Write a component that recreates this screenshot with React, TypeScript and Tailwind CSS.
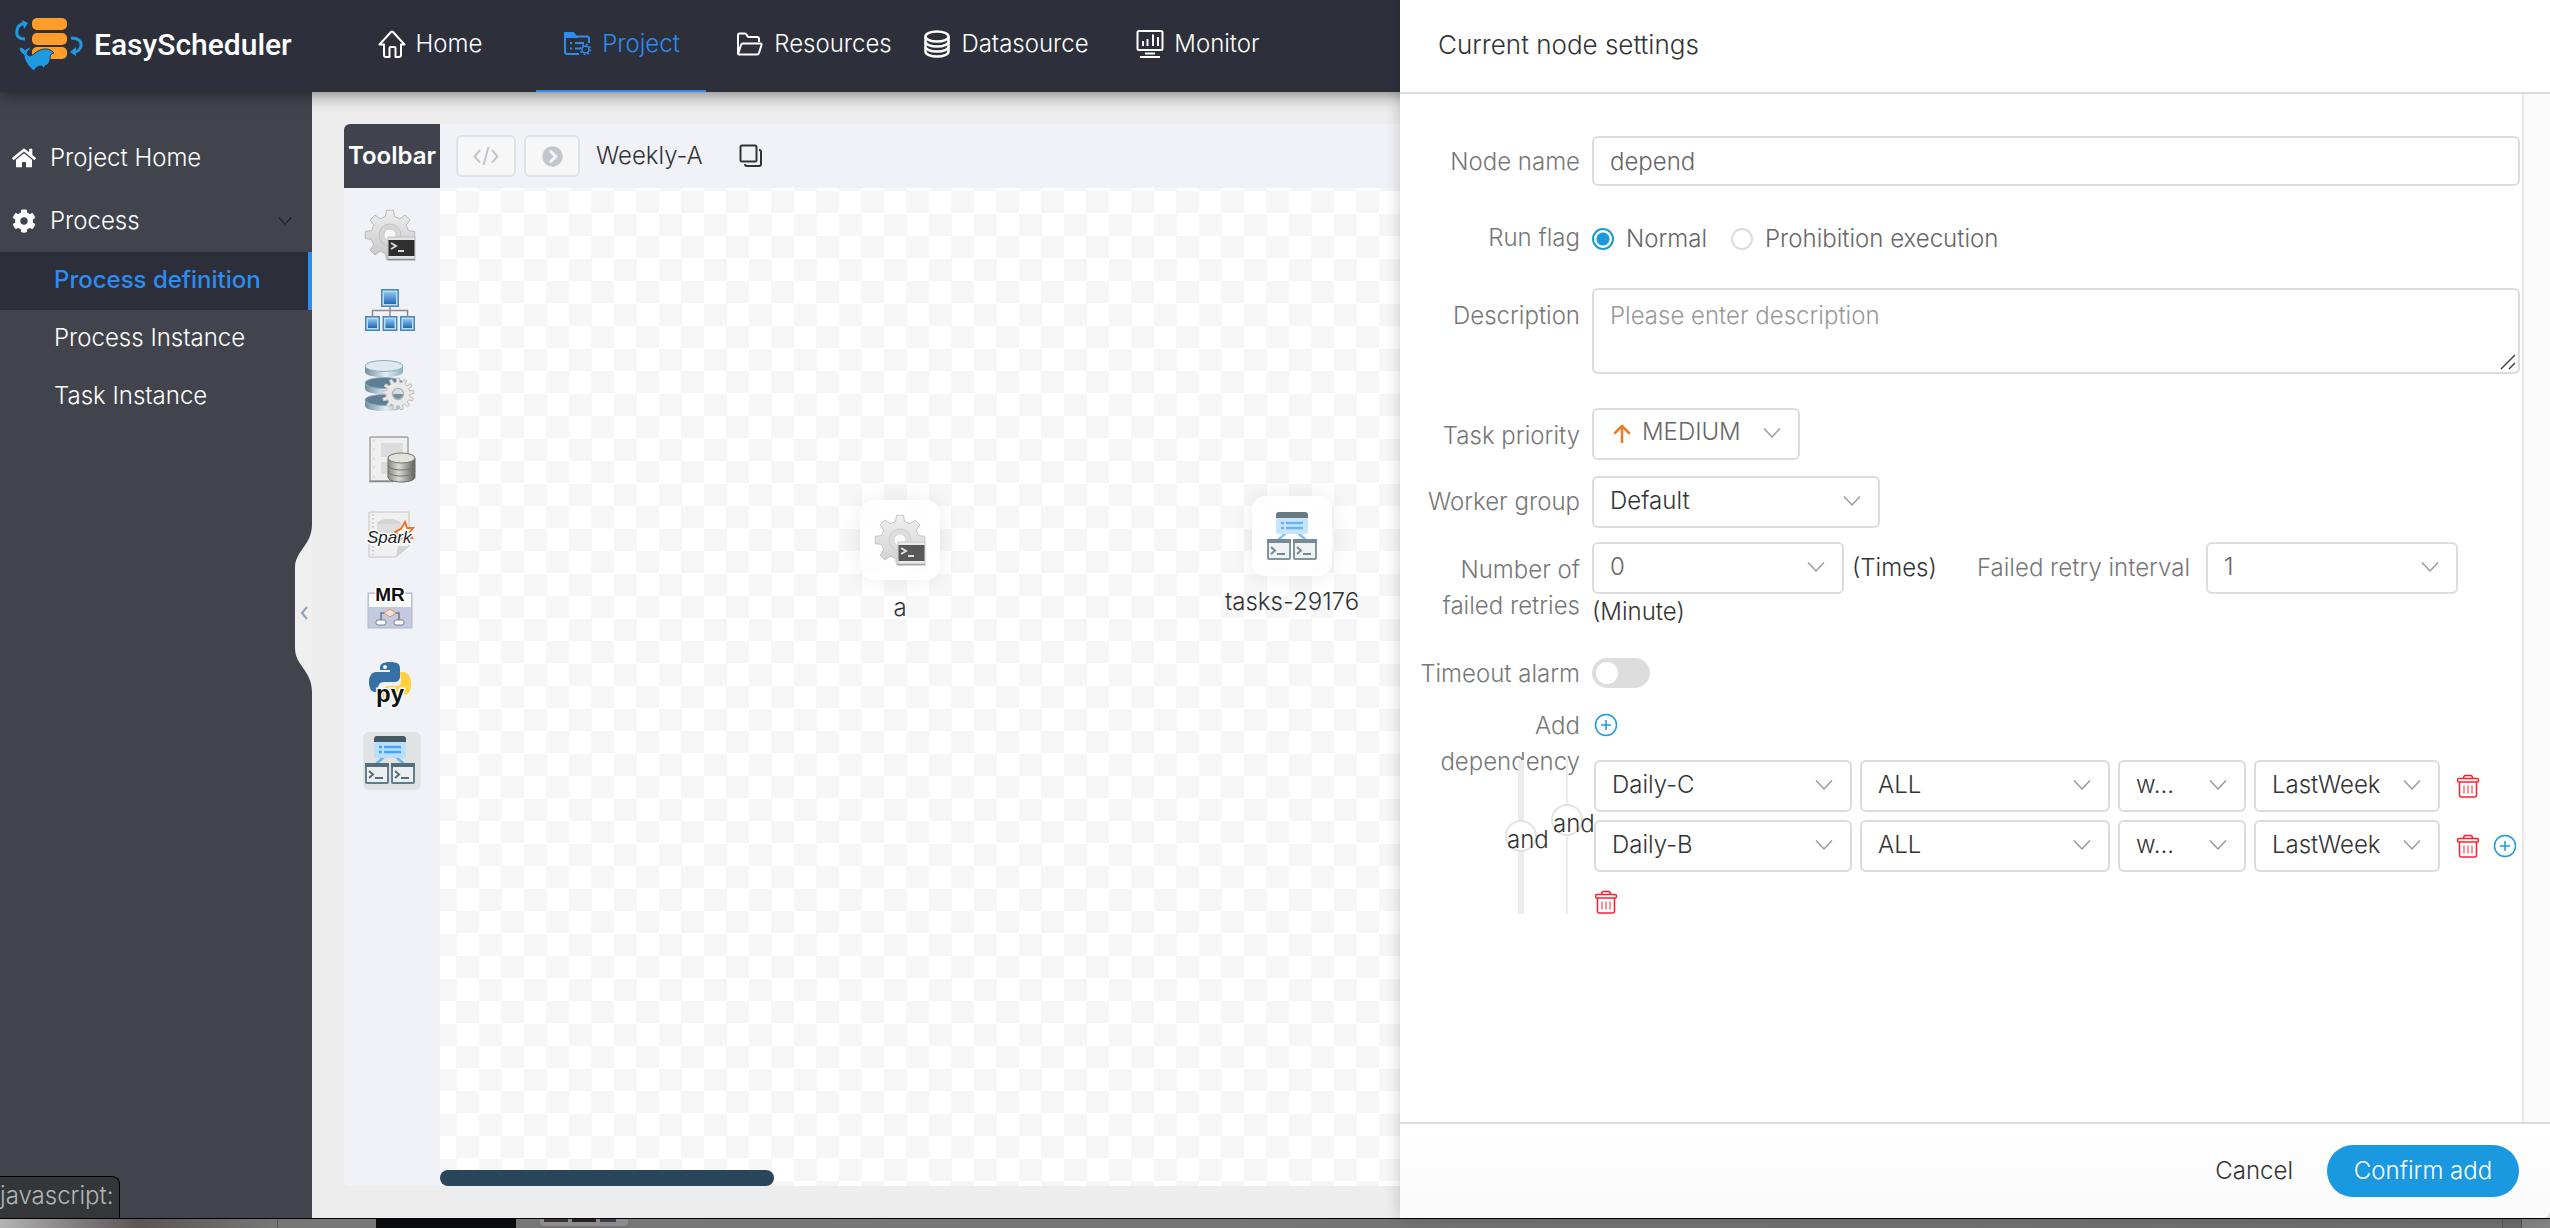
import { useState } from "react";
import type { ReactNode } from "react";
import { FaHome, FaCog, FaChevronCircleRight } from "react-icons/fa";

type P = { className?: string };

/** Outline of a cog wheel with flat-topped teeth. */
function gearPath(cx: number, cy: number, outer: number, inner: number, teeth: number) {
  const step = (Math.PI * 2) / teeth;
  const pts: string[] = [];
  for (let i = 0; i < teeth; i++) {
    const a = i * step - Math.PI / 2;
    const corners: [number, number][] = [
      [inner, -0.3],
      [outer, -0.18],
      [outer, 0.18],
      [inner, 0.3],
    ];
    for (const [r, f] of corners) {
      pts.push(`${(cx + r * Math.cos(a + f * step)).toFixed(2)} ${(cy + r * Math.sin(a + f * step)).toFixed(2)}`);
    }
  }
  return `M${pts.join("L")}Z`;
}

/* ---------- brand and navigation icons ---------- */

function Logo() {
  return (
    <svg className="h-[56px] w-[70px] shrink-0" viewBox="0 0 70 56" fill="none" aria-hidden="true">
      <g fill="#ff9d2a">
        <rect x="18" y="2" width="35" height="12" rx="5" />
        <rect x="18" y="17" width="35" height="12" rx="5" />
        <rect x="18" y="31" width="35" height="12" rx="5" />
      </g>
      <path d="M11 23C4 23 2 19 3 15c0-4 3-7 8-8" stroke="#1d9ae0" strokeWidth="3" />
      <path d="M8 4l6 3-4 6" fill="#1d9ae0" />
      <path d="M57 22c7 0 11 3 10 8-1 4-4 6-8 6" stroke="#1d9ae0" strokeWidth="3" />
      <path d="M62 31l-6 5 6 4z" fill="#1d9ae0" />
      <path
        d="M5 31c3 0 5 1 6 3 2-2 4-3 6-2-2 2-4 4-4 6 2 3 5 2 8-1 5-4 11-5 15-3 2 1 3 2 4 3-3 1-4 2-4 4 1 4-2 8-5 9l-2 3-1-3c-4 0-6 1-8 5-5-4-10-10-10-16-3-2-5-4-5-8z"
        fill="#1d9ae0"
        stroke="#2d2f3b"
        strokeWidth="1"
      />
    </svg>
  );
}

function HomeIcon() {
  return (
    <svg className="size-[28px]" viewBox="0 0 28 28" fill="none" stroke="currentColor" strokeWidth="2" strokeLinejoin="round" aria-hidden="true">
      <path d="M1.5 14.5L13 2q1-1 2 0l11.500 12.500h-3.500V25q0 2-2 2h-3.500v-9q0-1-1-1h-4q-1 0-1 1v9H8q-2 0-2-2V14.500z" />
    </svg>
  );
}

function ProjectIcon() {
  return (
    <svg className="h-[24px] w-[28px]" viewBox="0 0 28 24" fill="none" stroke="currentColor" strokeWidth="2" aria-hidden="true">
      <path d="M15 22H3q-2 0-2-2V2.500" />
      <path d="M1 1.500Q1 1 2 1h7l3 3.500h11q2 0 2 2V11" />
      <path d="M1 1h8l3 4H1z" fill="currentColor" />
      <path d="M6 11h2m3 0h9M6 16.500h2m3 0h5" strokeWidth="2" />
      <circle cx="21.500" cy="17.500" r="3.500" strokeWidth="1.500" />
      <circle cx="21.500" cy="17.500" r="5" strokeWidth="1.500" strokeDasharray="1.900 2" />
    </svg>
  );
}

function FolderIcon() {
  return (
    <svg className="h-[24px] w-[28px]" viewBox="0 0 28 24" fill="none" stroke="currentColor" strokeWidth="2" strokeLinejoin="round" aria-hidden="true">
      <path d="M2 22V3q0-1.500 1.500-1.500H9q1 0 1.500 1L12 5h9q2 0 2 2v3" />
      <path d="M2 22L5 13q.5-1.500 2-1.500h17.500q1.500 0 1 1.500l-2.500 8q-.5 1.500-2 1.500H3q-1 0-1-1z" />
    </svg>
  );
}

function DatabaseIcon() {
  return (
    <svg className="size-[28px]" viewBox="0 0 28 28" fill="none" stroke="currentColor" strokeWidth="2.500" aria-hidden="true">
      <ellipse cx="14" cy="6.500" rx="11.500" ry="5" />
      <path d="M2.500 6.500v15c0 2.800 5 5 11.500 5s11.500-2.200 11.500-5v-15" />
      <path d="M2.500 11.500c0 2.800 5 5 11.500 5s11.500-2.200 11.500-5M2.500 16.500c0 2.800 5 5 11.500 5s11.500-2.200 11.500-5" />
    </svg>
  );
}

function MonitorIcon() {
  return (
    <svg className="size-[28px]" viewBox="0 0 28 28" fill="none" stroke="currentColor" strokeWidth="2" aria-hidden="true">
      <rect x="1.500" y="1" width="25" height="19" rx="1.500" />
      <path d="M7 11v5m4.500-7v7M17 4.500V16m5-9v9M9 23.500h10M4 27h20" />
    </svg>
  );
}

function ChevronDown({ className = "" }: P) {
  return (
    <svg className={className} viewBox="0 0 18 12" fill="none" stroke="currentColor" strokeWidth="1.500" aria-hidden="true">
      <path d="M1 1.500l8 8.500 8-8.500" />
    </svg>
  );
}

function CopyIcon() {
  return (
    <svg className="h-[24px] w-[24px]" viewBox="0 0 24 24" fill="none" stroke="currentColor" strokeWidth="2" aria-hidden="true">
      <rect x="1.500" y="1.500" width="16" height="16" rx="1.500" />
      <path d="M20 6q2 0 2 2v12q0 2-2 2H8q-2 0-2-2" />
    </svg>
  );
}

function CodeIcon() {
  return (
    <svg className="h-[20px] w-[26px]" viewBox="0 0 26 20" fill="none" stroke="currentColor" strokeWidth="2" aria-hidden="true">
      <path d="M7 4L1.500 10.500 7 16.500M19 4l5.500 6.500L19 16.500M15.500 1l-5 18" />
    </svg>
  );
}

function PlusCircle() {
  return (
    <svg className="size-6" viewBox="0 0 24 24" fill="none" stroke="currentColor" strokeWidth="1.500" aria-hidden="true">
      <circle cx="12" cy="12" r="10.500" />
      <path d="M12 7v10M7 12h10" />
    </svg>
  );
}

function TrashIcon() {
  return (
    <svg className="size-6" viewBox="0 0 24 24" fill="none" stroke="currentColor" strokeWidth="1.500" strokeLinejoin="round" aria-hidden="true">
      <path d="M7.500 4.500q0-3 2-3h5q2 0 2 3" />
      <rect x="1.500" y="4.500" width="21" height="3.500" rx="1.500" />
      <path d="M3.500 8v13q0 2 2 2h13q2 0 2-2V8" />
      <path d="M8 11.500v8m4-8v8m4-8v8" strokeWidth="1" />
    </svg>
  );
}

/* ---------- task type icons ---------- */

function ShellIcon() {
  return (
    <svg className="size-[52px]" viewBox="0 0 52 52" aria-hidden="true">
      <defs>
        <linearGradient id="gearFill" x1="0" y1="0" x2="0" y2="1">
          <stop offset="0" stopColor="#ededed" />
          <stop offset="1" stopColor="#c6c6c6" />
        </linearGradient>
      </defs>
      <path d={gearPath(26, 26, 25, 19, 8)} fill="url(#gearFill)" stroke="#b8b8b8" strokeWidth="1" strokeLinejoin="round" />
      <circle cx="26" cy="26" r="11" fill="#d6d6d6" stroke="#c2c2c2" />
      <circle cx="26" cy="26" r="6" fill="#fafafa" stroke="#cfcfcf" />
      <rect x="24" y="28" width="27" height="23" fill="#e4e4e4" stroke="#bdbdbd" />
      <rect x="24.500" y="31" width="26" height="16" fill="#2f2f2f" />
      <path d="M27 34l5 3-5 3M34 42h6" stroke="#d8d8d8" strokeWidth="2" fill="none" />
      <path d="M24 50.500h27" stroke="#8d8d8d" strokeWidth="1.500" />
    </svg>
  );
}

function SubProcessIcon() {
  const box = (x: number, y: number, w: number, h: number) => (
    <g key={x}>
      <rect x={x} y={y} width={w} height={h} fill="#4d86b8" />
      <rect x={x + 1.5} y={y + 1.5} width={w - 3} height={h - 3} fill="#b8dcf3" />
      <rect x={x + 3} y={y + 3} width={w - 6} height={h - 6} fill="url(#screenFill)" />
    </g>
  );
  return (
    <svg className="size-[52px]" viewBox="0 0 52 52" aria-hidden="true">
      <defs>
        <linearGradient id="screenFill" x1="0" y1="0" x2="0" y2="1">
          <stop offset="0" stopColor="#8cc4ee" />
          <stop offset="1" stopColor="#1e68b4" />
        </linearGradient>
      </defs>
      <path d="M26 22v10M8.500 33v-6.500h35V33" stroke="#8d8d8d" strokeWidth="1.500" fill="none" />
      {box(17, 5, 18, 18)}
      {box(1, 32, 15, 15)}
      {box(18.500, 32, 15, 15)}
      {box(36, 32, 15, 15)}
    </svg>
  );
}

function ProcedureIcon() {
  return (
    <svg className="size-[52px]" viewBox="0 0 52 52" aria-hidden="true">
      <defs>
        <linearGradient id="drumFill" x1="0" y1="0" x2="1" y2="0">
          <stop offset="0" stopColor="#6d8fa4" />
          <stop offset="0.550" stopColor="#e2edf2" />
          <stop offset="1" stopColor="#8fb0c2" />
        </linearGradient>
      </defs>
      {[35, 18, 1].map((y) => (
        <g key={y}>
          <path d={`M1 ${y + 6}v6c0 3 8 5 19 5s19-2 19-5v-6z`} fill="url(#drumFill)" />
          <ellipse cx="20" cy={y + 6} rx="19" ry="5.500" fill={y === 1 ? "#dfe9ee" : "#5e7f93"} stroke="#8facbc" strokeWidth="1" />
        </g>
      ))}
      <path d={gearPath(34, 35, 16, 12, 13)} fill="#e9e9e9" stroke="#bcbcbc" strokeWidth="1" />
      <circle cx="34" cy="35" r="5.500" fill="#6f8fa2" stroke="#b5b5b5" strokeWidth="1.500" />
      <path d="M29 35a5 5 0 0 1 10 0z" fill="#d5e0e6" />
    </svg>
  );
}

function SqlIcon() {
  return (
    <svg className="size-[52px]" viewBox="0 0 52 52" aria-hidden="true">
      <defs>
        <linearGradient id="canFill" x1="0" y1="0" x2="1" y2="0">
          <stop offset="0" stopColor="#8a8a85" />
          <stop offset="0.400" stopColor="#dcdcd6" />
          <stop offset="1" stopColor="#5f5f5a" />
        </linearGradient>
      </defs>
      <rect x="6" y="3" width="38" height="44" rx="1" fill="#efefef" stroke="#a3a3a3" strokeWidth="1.500" />
      <path d="M10 5v40" stroke="#cfcfcf" strokeWidth="1" strokeDasharray="3 6" />
      <path d="M17 9h22v14H17zM17 28h8v12h-8z" fill="#dcdcdc" />
      <path d="M5 47.500h24" stroke="#888888" strokeWidth="1.500" />
      <path d="M24 24v19c0 3 6 5 13.500 5S51 46 51 43V24z" fill="url(#canFill)" stroke="#6c6c68" strokeWidth="1" />
      <ellipse cx="37.500" cy="24" rx="13.500" ry="5" fill="#e3e3de" stroke="#73736f" strokeWidth="1" />
      <path d="M24 31c0 3 6 5 13.500 5S51 34 51 31M24 37c0 3 6 5 13.500 5S51 40 51 37" fill="none" stroke="#74746f" strokeWidth="1" />
    </svg>
  );
}

function SparkIcon() {
  return (
    <svg className="size-[52px]" viewBox="0 0 52 52" aria-hidden="true">
      <path d="M5 3h40v34L32 48H5z" fill="#f0f0f0" stroke="#c4c4c4" strokeWidth="1" />
      <path d="M45 37H34l-2 11z" fill="#d4d4d4" />
      <path d="M9 5v41" stroke="#c8c8c8" strokeWidth="2" strokeDasharray="1.500 2.500" />
      <ellipse cx="25" cy="15" rx="12" ry="5" fill="#d3d3d3" />
      <path d="M13 15v9h24v-9" fill="#dedede" />
      <path d="M41 13l2 6 6 0-4 5 3 5-7-1-5 3 0-5-5-3 6-3z" fill="#ffffff" stroke="#f0742c" strokeWidth="2" />
      <text x="3" y="34" fontSize="17" fontStyle="italic" fontWeight="400" fontFamily="Liberation Sans, sans-serif" fill="#1e1e1e" stroke="#ffffff" strokeWidth="3" paintOrder="stroke">
        Spark
      </text>
    </svg>
  );
}

function MrIcon() {
  return (
    <svg className="size-[52px]" viewBox="0 0 52 52" aria-hidden="true">
      <rect x="4" y="9" width="44" height="35" fill="#c3c9de" stroke="#b3b8cb" strokeWidth="1" />
      <rect x="5" y="10" width="42" height="13" fill="#fafafc" />
      <path d="M17 39v-10h6M29 29h6v10" fill="none" stroke="#6f7688" strokeWidth="1.500" />
      <path d="M26 25l6 4-6 4-6-4z" fill="#e9e3e0" stroke="#e0955a" strokeWidth="1" />
      <rect x="12" y="36" width="10" height="5" rx="2" fill="#fff" stroke="#777f90" />
      <rect x="30" y="36" width="10" height="5" rx="2" fill="#fff" stroke="#777f90" />
      <text x="26" y="17" textAnchor="middle" fontSize="19" fontWeight="700" fontFamily="Liberation Sans, sans-serif" fill="#111111" stroke="#ffffff" strokeWidth="3" paintOrder="stroke">
        MR
      </text>
    </svg>
  );
}

function PythonIcon() {
  return (
    <svg className="size-[52px]" viewBox="0 0 52 52" aria-hidden="true">
      <path d="M36 13h3c5 0 8 5 8 12 0 8-3 11-8 11H25v4H17v-5c0-5 3-8 8-8h8q4 0 4-6z" fill="#ffcf3e" />
      <path d="M16 9c0-4 3-6 10-6s10 2 10 6v8c0 4-2 6-6 6H20c-4 0-6 3-6 6v4h-3c-4 0-6-4-6-10s3-10 7-10h14v-2H16z" fill="#3571a4" />
      <circle cx="21" cy="8" r="2" fill="#ffffff" />
      <text x="26" y="43" textAnchor="middle" fontSize="24" fontWeight="700" fontFamily="Liberation Sans, sans-serif" fill="#111111" stroke="#ffffff" strokeWidth="3" paintOrder="stroke">
        py
      </text>
    </svg>
  );
}

function DependentIcon() {
  return (
    <svg className="size-[52px]" viewBox="0 0 52 52" aria-hidden="true">
      <path d="M20 23l-8 7M32 23l8 7" stroke="#64b5f6" strokeWidth="2.500" />
      <rect x="10" y="4" width="32" height="20" rx="2" fill="#bbdefb" />
      <path d="M10 8V5q0-3 3-3h26q3 0 3 3v3z" fill="#455a64" />
      <path d="M15 13h3m2 0h17M15 18h3m2 0h17" stroke="#42a5f5" strokeWidth="2.500" />
      {[1, 27].map((x) => (
        <g key={x}>
          <rect x={x + 1} y="30" width="22" height="19" rx="1" fill="#eceff1" stroke="#607d8b" strokeWidth="2" />
          <path d={`M${x} 31h24`} stroke="#546e7a" strokeWidth="4" />
          <path d={`M${x + 4} 37l4 3.500-4 3.500M${x + 10} 44h8`} fill="none" stroke="#546e7a" strokeWidth="2" />
        </g>
      ))}
    </svg>
  );
}

/* ---------- shared controls ---------- */

function Select({ label, value, options, width, className = "text-[#333]", lead }: {
  label: string;
  value: string;
  options?: string[];
  width: string;
  className?: string;
  lead?: ReactNode;
}) {
  const [v, setV] = useState(value);
  return (
    <div className={`relative shrink-0 ${width}`}>
      {lead}
      <select
        aria-label={label}
        value={v}
        onChange={(e) => setV(e.target.value)}
        className={`block h-[52px] w-full appearance-none rounded-md border-2 border-[#dcdcdc] bg-white pr-10 ${lead ? "pb-1 pl-[48px]" : "pb-[2px] pl-4"} ${className}`}
      >
        {(options ?? [value]).map((o) => (
          <option key={o}>{o}</option>
        ))}
      </select>
      <ChevronDown className="pointer-events-none absolute top-[19px] right-[19px] h-[12px] w-[18px] text-[#999]" />
    </div>
  );
}

function Row({ label, htmlFor, className, labelClass = "pl-6", children }: {
  label: string;
  htmlFor?: string;
  className: string;
  labelClass?: string;
  children: ReactNode;
}) {
  return (
    <div className={`flex items-start gap-3 ${className}`}>
      <label htmlFor={htmlFor} className={`w-[180px] shrink-0 text-right leading-9 text-[#777] ${labelClass}`}>
        {label}
      </label>
      <div className="min-w-0 flex-1">{children}</div>
    </div>
  );
}

const NAV = [
  { name: "Home", icon: <HomeIcon /> },
  { name: "Project", icon: <ProjectIcon /> },
  { name: "Resources", icon: <FolderIcon /> },
  { name: "Datasource", icon: <DatabaseIcon /> },
  { name: "Monitor", icon: <MonitorIcon /> },
];

const TOOLS = [
  { name: "Shell", icon: <ShellIcon /> },
  { name: "Sub process", icon: <SubProcessIcon /> },
  { name: "Procedure", icon: <ProcedureIcon /> },
  { name: "SQL", icon: <SqlIcon /> },
  { name: "Spark", icon: <SparkIcon /> },
  { name: "MR", icon: <MrIcon /> },
  { name: "Python", icon: <PythonIcon /> },
  { name: "Dependent", icon: <DependentIcon /> },
];

const DEPENDENCIES = ["Daily-C", "Daily-B"];

function Header() {
  return (
    <header className="relative z-10 flex h-[92px] shrink-0 bg-[#2d2f3b] text-white shadow-[0_2px_16px_rgba(0,0,0,0.5)]">
      <a href="#home" className="flex w-[344px] shrink-0 items-center gap-[10px] pb-1 pl-[14px]">
        <Logo />
        <span className="font-[Roboto,sans-serif] text-[30px] font-medium">EasyScheduler</span>
      </a>
      <nav className="flex gap-[22px]">
        {NAV.map((n) => (
          <a
            key={n.name}
            href={`#${n.name.toLowerCase()}`}
            className={`flex w-[170px] items-center justify-center gap-[10px] border-b-2 pb-[2px] pl-[2px] ${
              n.name === "Project" ? "border-[#2d8cf0] text-[#2d8cf0]" : "border-transparent"
            }`}
          >
            {n.icon}
            {n.name}
          </a>
        ))}
      </nav>
    </header>
  );
}

function Sidebar() {
  return (
    <aside className="relative w-[312px] shrink-0 bg-[#41444d] pt-[34px] text-white">
      <a href="#project-home" className="flex h-16 items-center gap-[14px] pl-3">
        <FaHome className="size-6" />
        Project Home
      </a>
      <button type="button" className="flex h-[62px] w-full items-center gap-[14px] pr-5 pl-3 text-left">
        <FaCog className="size-6" />
        <span className="flex-1">Process</span>
        <ChevronDown className="h-[10px] w-[14px] text-[#222]" />
      </button>
      <a href="#definition" className="flex h-[58px] items-center border-r-4 border-[#2d8cf0] bg-[#2c2e3a] pb-[2px] pl-[54px] font-medium text-[#2d8cf0]">
        Process definition
      </a>
      <a href="#instance" className="flex h-[58px] items-center pb-[2px] pl-[54px]">
        Process Instance
      </a>
      <a href="#task" className="flex h-[58px] items-center pb-[2px] pl-[54px]">
        Task Instance
      </a>
      <button type="button" aria-label="Collapse menu" className="absolute top-[432px] right-0">
        <svg className="h-[168px] w-[18px]" viewBox="0 0 18 168" fill="none" aria-hidden="true">
          <path d="M18 0C18 22 1 26 1 44v80c0 18 17 22 17 44z" fill="#efeff0" />
          <path d="M13 83l-5 6 5 6" stroke="#8fa0c0" strokeWidth="2" />
        </svg>
      </button>
    </aside>
  );
}

function Canvas() {
  return (
    <div className="relative min-w-0 flex-1 overflow-hidden bg-[repeating-conic-gradient(#f6f6f6_0_25%,#ffffff_0_50%)] bg-[length:45px_45px] bg-[position:-6px_3px]">
      <div className="absolute top-[312px] left-[420px] flex w-20 flex-col items-center">
        <div className="flex size-20 items-center justify-center rounded-[14px] bg-white/90 shadow-[0_0_20px_rgba(0,0,0,0.08)]">
          <div className="opacity-80">
            <ShellIcon />
          </div>
        </div>
        <span className="mt-[10px] leading-9 whitespace-nowrap">a</span>
      </div>
      <div className="absolute top-[308px] left-[812px] flex w-20 flex-col items-center">
        <div className="flex size-20 items-center justify-center rounded-[14px] bg-white/90 shadow-[0_0_20px_rgba(0,0,0,0.08)]">
          <div className="opacity-80">
            <DependentIcon />
          </div>
        </div>
        <span className="mt-[8px] leading-9 whitespace-nowrap">tasks-29176</span>
      </div>
      <div className="absolute bottom-0 left-0 h-4 w-[334px] rounded-full bg-[#2b455a]" />
    </div>
  );
}

function Workspace() {
  return (
    <main className="flex min-w-0 flex-1 bg-[#ededed] pt-8 pb-8 pl-8">
      <div className="flex min-w-0 flex-1 flex-col overflow-hidden rounded-l-md bg-[#f0f2f7]">
        <div className="flex h-16 shrink-0 items-center">
          <h2 className="flex h-full w-24 items-center justify-center bg-[#40424d] font-semibold text-white">Toolbar</h2>
          <button type="button" aria-label="View source" className="ml-4 flex h-[42px] w-[60px] items-center justify-center rounded-md border-2 border-[#e0e1e6] bg-[#f7f7f7] text-[#c3c6cc]">
            <CodeIcon />
          </button>
          <button type="button" aria-label="Run" className="ml-2 flex h-[42px] w-14 items-center justify-center rounded-md border-2 border-[#e0e1e6] bg-[#f7f7f7] text-[#c3c6cc]">
            <FaChevronCircleRight className="size-[21px]" />
          </button>
          <span className="ml-4">Weekly-A</span>
          <button type="button" aria-label="Copy name" className="ml-9">
            <CopyIcon />
          </button>
        </div>
        <div className="flex min-h-0 flex-1">
          <div className="flex w-24 shrink-0 flex-col items-center gap-[17px] pt-[19px]">
            {TOOLS.map((t) => (
              <button
                key={t.name}
                type="button"
                aria-label={t.name}
                className={`flex size-[58px] shrink-0 items-center justify-center rounded-md pr-1 pb-[2px] ${t.name === "Dependent" ? "bg-[#e0e2e4]" : ""}`}
              >
                {t.icon}
              </button>
            ))}
          </div>
          <Canvas />
        </div>
      </div>
    </main>
  );
}

function Relation({ className, line, knob }: { className: string; line: string; knob: string }) {
  return (
    <div className={`absolute top-0 h-[154px] w-8 ${className}`}>
      <div className={`mx-auto h-full bg-[#ececec] ${line}`} />
      <button type="button" className={`absolute left-0 size-8 rounded-full border-2 border-[#e2e2e2] bg-white leading-9 text-[#333] ${knob}`}>
        and
      </button>
    </div>
  );
}

function NodeForm() {
  const [flag, setFlag] = useState("normal");
  const radio =
    "size-[22px] appearance-none rounded-full border-2 border-[#dcdcdc] bg-white checked:border-[#1a99e0] checked:bg-[radial-gradient(#1a99e0_0_6px,#ffffff_7px)]";
  return (
    <form className="min-w-0 flex-1 pt-[42px] pr-[2px] text-[#666]" onSubmit={(e) => e.preventDefault()}>
      <Row label="Node name" htmlFor="node-name" className="h-[50px]" labelClass="pt-2">
        <input id="node-name" defaultValue="depend" className="block h-[50px] w-full rounded-md border-2 border-[#dcdcdc] px-4" />
      </Row>
      <Row label="Run flag" className="mt-[34px] h-9">
        <div className="flex h-[38px] items-center gap-6">
          <label className="flex items-center gap-3">
            <input type="radio" name="flag" className={radio} checked={flag === "normal"} onChange={() => setFlag("normal")} />
            Normal
          </label>
          <label className="flex items-center gap-3">
            <input type="radio" name="flag" className={radio} checked={flag === "none"} onChange={() => setFlag("none")} />
            Prohibition execution
          </label>
        </div>
      </Row>
      <Row label="Description" htmlFor="description" className="mt-8 h-[86px]" labelClass="pt-[10px]">
        <div className="relative">
          <textarea
            id="description"
            placeholder="Please enter description"
            className="block h-[86px] w-full resize-none rounded-md border-2 border-[#dcdcdc] px-4 py-2 leading-9 placeholder:text-[#999]"
          />
          <svg className="pointer-events-none absolute right-1 bottom-1 size-4" viewBox="0 0 16 16" stroke="#444" strokeWidth="1.500" aria-hidden="true">
            <path d="M1 15L15 1M9 15l6-6" />
          </svg>
        </div>
      </Row>
      <Row label="Task priority" className="mt-[34px] h-[52px]" labelClass="pt-[10px]">
        <Select
          label="Task priority"
          value="MEDIUM"
          options={["HIGHEST", "HIGH", "MEDIUM", "LOW", "LOWEST"]}
          width="w-[208px]"
          className="text-[#666]"
          lead={
            <svg className="pointer-events-none absolute top-4 left-5 h-5 w-[20px]" viewBox="0 0 20 20" fill="none" stroke="#ea7d24" strokeWidth="2.500" strokeLinecap="round" strokeLinejoin="round" aria-hidden="true">
              <path d="M10 18V2M3 9l7-7 7 7" />
            </svg>
          }
        />
      </Row>
      <Row label="Worker group" className="mt-4 h-[52px]" labelClass="pt-2">
        <Select label="Worker group" value="Default" width="w-[288px]" />
      </Row>
      <Row label="Number of failed retries" className="mt-[14px] h-[88px]" labelClass="pt-[10px] pl-6">
        <div className="flex items-center">
          <Select label="Number of failed retries" value="0" options={["0", "1", "2", "3"]} width="w-[252px]" className="text-[#666]" />
          <span className="ml-2 text-[#333]">(Times)</span>
          <span className="mr-4 ml-auto text-[#777]">Failed retry interval</span>
          <div className="mr-[62px]">
            <Select label="Failed retry interval" value="1" options={["1", "10", "30"]} width="w-[252px]" className="text-[#666]" />
          </div>
        </div>
        <div className="leading-9 text-[#333]">(Minute)</div>
      </Row>
      <Row label="Timeout alarm" htmlFor="timeout" className="mt-[26px] h-9" labelClass="pl-2">
        <input
          id="timeout"
          type="checkbox"
          role="switch"
          className="mt-[2px] block h-[30px] w-[58px] appearance-none rounded-full bg-[#ddd] pt-1 pl-1 before:block before:size-[22px] before:rounded-full before:bg-white checked:bg-[#1a99e0] checked:before:ml-7"
        />
      </Row>
      <Row label="Add dependency" className="mt-4" labelClass="pl-10">
        <button type="button" aria-label="Add dependency group" className="mt-[5px] ml-[2px] block text-[#1a99e0]">
          <PlusCircle />
        </button>
        <div className="relative mt-[23px] ml-[2px] flex flex-col gap-2">
          <Relation className="left-[-89px]" line="w-[6px]" knob="top-[60px]" />
          <Relation className="left-[-43px]" line="w-[2px]" knob="top-[44px]" />
          {DEPENDENCIES.map((d, i) => (
            <div key={d} className="flex items-center gap-2">
              <Select label="Process definition" value={d} width="w-[258px]" />
              <Select label="Task" value="ALL" width="w-[250px]" />
              <Select label="Cycle" value="w..." width="w-[128px]" />
              <Select label="Date" value="LastWeek" width="w-[186px]" />
              <button type="button" aria-label="Delete dependency" className="ml-2 text-[#ff1f2f]">
                <TrashIcon />
              </button>
              {i === DEPENDENCIES.length - 1 && (
                <button type="button" aria-label="Add dependency" className="ml-[5px] text-[#1a99e0]">
                  <PlusCircle />
                </button>
              )}
            </div>
          ))}
          <button type="button" aria-label="Delete group" className="mt-[10px] w-6 text-[#ff1f2f]">
            <TrashIcon />
          </button>
        </div>
      </Row>
    </form>
  );
}

function SettingsDrawer() {
  return (
    <section className="absolute top-0 right-0 bottom-[10px] z-20 flex w-[1150px] flex-col overflow-hidden rounded-br-lg bg-white shadow-[0_0_16px_rgba(0,0,0,0.2)]">
      <h1 className="flex h-[94px] shrink-0 items-center border-b-2 border-[#dcdcdc] px-[38px] pb-1 text-[26px]">Current node settings</h1>
      <div className="flex min-h-0 flex-1">
        <NodeForm />
        <div className="w-7 shrink-0 border-l-2 border-[#e8e8e8] bg-[#fafafa]" />
      </div>
      <footer className="flex h-24 shrink-0 items-center justify-end gap-[34px] border-t-2 border-[#dcdcdc] bg-linear-to-b from-white to-[#fafafa] pr-[31px]">
        <button type="button">Cancel</button>
        <button type="button" className="h-[52px] w-[192px] rounded-full bg-[#1a99e0] text-white">
          Confirm add
        </button>
      </footer>
    </section>
  );
}

export default function App() {
  return (
    <div className="relative flex min-h-screen flex-col overflow-hidden bg-[#747474] font-[Inter,sans-serif] text-[24px] font-light text-[#333]">
      <Header />
      <div className="flex flex-1">
        <Sidebar />
        <Workspace />
      </div>
      <SettingsDrawer />
      <div className="absolute bottom-[10px] left-0 z-30 h-[42px] rounded-tr-lg border-t border-r border-black bg-[#333739] pr-[6px] leading-[38px] text-[#b4b6b7]">
        javascript:
      </div>
      <div className="flex h-[10px] shrink-0 border-t border-black">
        <div className="w-[278px] border-r border-[#555] bg-linear-to-r from-[#b4b4b4] via-[#5c5556] to-[#777]" />
        <div className="w-[98px] bg-[#777]" />
        <div className="w-[140px] bg-[#0c0d0f]" />
        <div className="w-6 bg-[#777]" />
        <div className="flex h-[7px] w-[88px] gap-1 rounded-b-sm bg-[#8d8d8d] px-1">
          <div className="h-[3px] w-6 bg-[#3a3432]" />
          <div className="h-[3px] w-6 bg-[#2a2220]" />
          <div className="h-[3px] w-4 bg-[#39424c]" />
        </div>
        <div className="flex-1 bg-linear-to-r from-[#777] to-[#707070]" />
        <div className="w-5 border-x border-[#555] bg-[#6c6c6c]" />
        <div className="w-7 bg-[#858585]" />
      </div>
    </div>
  );
}
